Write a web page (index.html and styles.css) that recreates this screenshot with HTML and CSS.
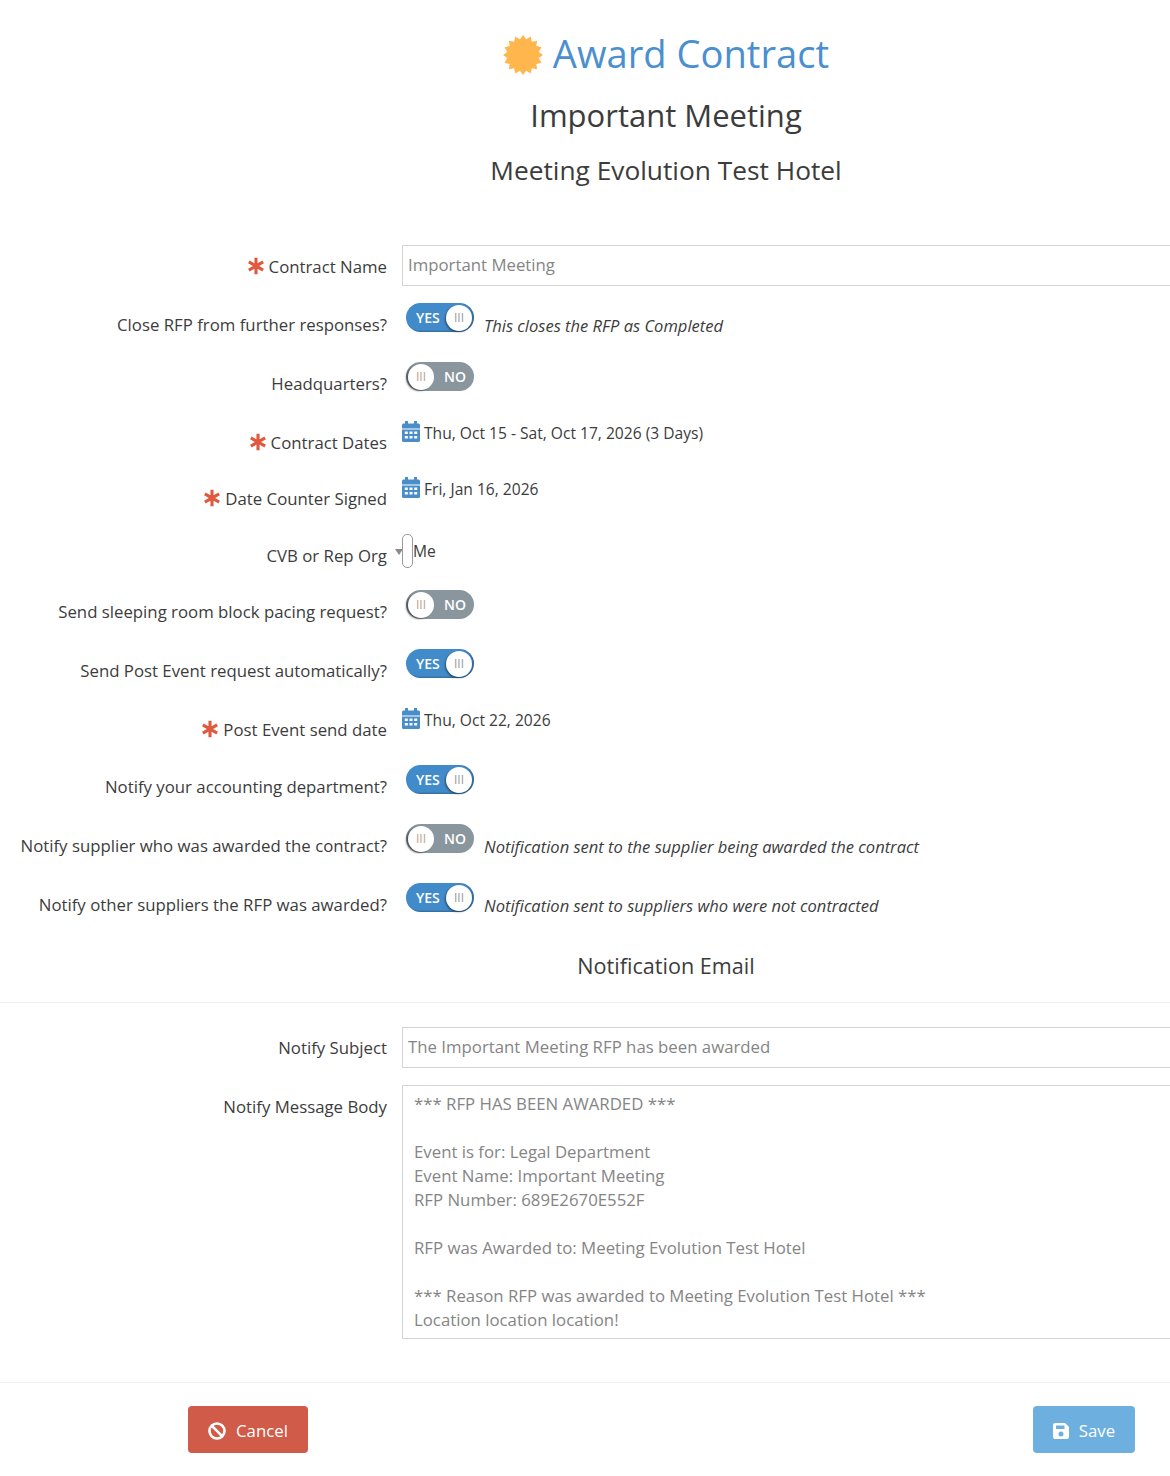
FILE: index.html
```html
<!DOCTYPE html>
<html lang="en">
<head>
    <meta charset="UTF-8">
    <meta name="viewport" content="width=device-width, initial-scale=1.0">
    <title>Award Contract</title>
    <link rel="stylesheet" href="styles.css">
</head>
<body>
    <svg class="defs" width="0" height="0">
        <symbol id="star" viewBox="0 0 24 24"><path d="M12 3v18M4.200 7.500l15.600 9M19.800 7.500l-15.600 9" fill="none" stroke="#e0593f" stroke-width="3.400"/></symbol>
        <symbol id="cal" viewBox="0 0 18 21"><path d="M3 0h3v2.500h6V0h3v2.500h1.500A1.500 1.500 0 0 1 18 4v3.500H0V4a1.500 1.500 0 0 1 1.500-1.500H3zM0 8.500h18v11a1.500 1.500 0 0 1-1.500 1.500h-15A1.500 1.500 0 0 1 0 19.500zM2.800 10.500v2.500h3v-2.500zm4.700 0v2.500h3v-2.500zm4.700 0v2.500h3v-2.500zM2.800 15v2.500h3V15zm4.700 0v2.500h3V15zm4.700 0v2.500h3V15z" fill="#4a8ec9" fill-rule="evenodd"/></symbol>
    </svg>

    <div class="page">
        <header class="titles">
            <h1>
                <svg class="sun" viewBox="-20 -20 40 40">
                    <polygon points="0,-20 3.120,-15.690 7.650,-18.480 8.890,-13.300 14.140,-14.140 13.300,-8.890 18.480,-7.650 15.690,-3.120 20,0 15.690,3.120 18.480,7.650 13.300,8.890 14.140,14.140 8.890,13.300 7.650,18.480 3.120,15.690 0,20 -3.120,15.690 -7.650,18.480 -8.890,13.300 -14.140,14.140 -13.300,8.890 -18.480,7.650 -15.690,3.120 -20,0 -15.690,-3.120 -18.480,-7.650 -13.300,-8.890 -14.140,-14.140 -8.890,-13.300 -7.650,-18.480 -3.120,-15.690"/>
                </svg>
                Award Contract
            </h1>
            <h2>Important Meeting</h2>
            <h3>Meeting Evolution Test Hotel</h3>
        </header>

        <form class="form">
            <div class="row row-input">
                <label><svg class="req"><use href="#star"/></svg>Contract Name</label>
                <div class="field">Important Meeting</div>
            </div>
            <div class="row row-toggle">
                <label>Close RFP from further responses?</label>
                <div class="value"><span class="toggle on"><b>YES</b><i>III</i></span><em>This closes the RFP as Completed</em></div>
            </div>
            <div class="row row-toggle">
                <label>Headquarters?</label>
                <div class="value"><span class="toggle off"><i>III</i><b>NO</b></span></div>
            </div>
            <div class="row row-date">
                <label><svg class="req"><use href="#star"/></svg>Contract Dates</label>
                <div class="date"><svg class="cal"><use href="#cal"/></svg>Thu, Oct 15 - Sat, Oct 17, 2026 (3 Days)</div>
            </div>
            <div class="row row-date">
                <label><svg class="req"><use href="#star"/></svg>Date Counter Signed</label>
                <div class="date"><svg class="cal"><use href="#cal"/></svg>Fri, Jan 16, 2026</div>
            </div>
            <div class="row row-select">
                <label>CVB or Rep Org</label>
                <div class="select"><span class="caret"></span><span class="stub"></span>Me</div>
            </div>
            <div class="row row-toggle">
                <label>Send sleeping room block pacing request?</label>
                <div class="value"><span class="toggle off"><i>III</i><b>NO</b></span></div>
            </div>
            <div class="row row-toggle">
                <label>Send Post Event request automatically?</label>
                <div class="value"><span class="toggle on"><b>YES</b><i>III</i></span></div>
            </div>
            <div class="row row-date row-tall">
                <label><svg class="req"><use href="#star"/></svg>Post Event send date</label>
                <div class="date"><svg class="cal"><use href="#cal"/></svg>Thu, Oct 22, 2026</div>
            </div>
            <div class="row row-toggle">
                <label>Notify your accounting department?</label>
                <div class="value"><span class="toggle on"><b>YES</b><i>III</i></span></div>
            </div>
            <div class="row row-toggle">
                <label>Notify supplier who was awarded the contract?</label>
                <div class="value"><span class="toggle off"><i>III</i><b>NO</b></span><em>Notification sent to the supplier being awarded the contract</em></div>
            </div>
            <div class="row row-toggle">
                <label>Notify other suppliers the RFP was awarded?</label>
                <div class="value"><span class="toggle on"><b>YES</b><i>III</i></span><em>Notification sent to suppliers who were not contracted</em></div>
            </div>

            <h4>Notification Email</h4>
            <hr>

            <div class="row row-input">
                <label>Notify Subject</label>
                <div class="field">The Important Meeting RFP has been awarded</div>
            </div>
            <div class="row row-body">
                <label>Notify Message Body</label>
                <div class="field area">*** RFP HAS BEEN AWARDED ***

Event is for: Legal Department
Event Name: Important Meeting
RFP Number: 689E2670E552F

RFP was Awarded to: Meeting Evolution Test Hotel

*** Reason RFP was awarded to Meeting Evolution Test Hotel ***
Location location location!</div>
            </div>
        </form>

        <hr class="foot-line">
        <footer class="actions">
            <button type="button" class="btn cancel">
                <svg viewBox="0 0 18 18"><circle cx="9" cy="9" r="7.500" fill="none" stroke="#fff" stroke-width="2.600"/><path d="M3.700 3.700l10.600 10.600" stroke="#fff" stroke-width="2.600"/></svg>
                Cancel
            </button>
            <button type="button" class="btn save">
                <svg viewBox="0 0 16 16"><path d="M2 0h10l4 4v10a2 2 0 0 1-2 2H2a2 2 0 0 1-2-2V2a2 2 0 0 1 2-2zm1 2.500V6h8.500V2.500zM8 8.500a2.500 2.500 0 1 0 0 5 2.500 2.500 0 0 0 0-5z" fill="#fff" fill-rule="evenodd"/></svg>
                Save
            </button>
        </footer>
    </div>
</body>
</html>
```

FILE: styles.css
```css
html, body { margin: 0; padding: 0; background: #fff; }
body { font-family: "Open Sans", Arial, sans-serif; font-size: 16px; color: #3c3c3c; }
.defs { position: absolute; }
.page { width: 1170px; height: 1476px; overflow: hidden; }

/* headings are centred on x=666, the form runs wider than the window */
.titles { text-align: center; padding: 27px 0 0 162px; height: 217px; box-sizing: border-box; }
h1 { margin: 0; font-size: 38.150px; line-height: 52px; font-weight: 400; color: #4a8fcf; }
h2 { margin: 13px 0 0; font-size: 31px; line-height: 46px; font-weight: 400; }
h3 { margin: 9px 0 0; font-size: 26.300px; line-height: 46px; font-weight: 400; }
.sun { width: 40px; height: 40px; vertical-align: -7px; fill: #ffb64d; }

.form { margin-top: 28px; }
.row { display: grid; grid-template-columns: 387px 1fr; column-gap: 15px; }
.row label { text-align: right; white-space: nowrap; font-size: 16.800px; line-height: 24px; }
.req { width: 22px; height: 22px; vertical-align: -4px; margin-right: 2px; }

.field { border: 1px solid #d4d4d4; border-right: 0; color: #858585; font-size: 16.800px; line-height: 24px; padding: 7px 5px 8px; height: 41px; box-sizing: border-box; }
.row-input { height: 60px; }
.row-input label { padding-top: 10px; }

.row-toggle { height: 59px; }
.row-toggle label { padding-top: 8px; }
.value { display: flex; align-items: flex-start; padding-left: 4px; margin-top: -2px; }
.value em { font-size: 16.550px; line-height: 24px; margin: 11px 0 0 10px; color: #3c3c3c; }
.toggle { width: 68px; height: 29px; border-radius: 15px; display: flex; align-items: center; justify-content: space-between; color: #fff; box-sizing: border-box; font-size: 14px; }
.toggle b { font-weight: 600; }
.toggle i { width: 26px; height: 26px; border-radius: 50%; background: #fff; color: #999; font-style: normal; font-size: 12px; text-align: center; line-height: 25px; font-weight: 400; }
.toggle.on { background: #428bca; padding: 0 2px 0 10px; box-shadow: inset -2px -1px 2px rgba(0, 0, 0, .25); }
.toggle.on i { box-shadow: -1px 1px 2px rgba(0, 0, 0, .45); }
.toggle.off { background: #8a969e; padding: 0 8px 0 2px; }
.toggle.off i { color: #b9a08c; box-shadow: -2px 1px 2px rgba(0, 0, 0, .45); }

.row-date { height: 56px; }
.row-tall { height: 57px; }
.row-date label { padding-top: 8px; }
.date { font-size: 15.600px; line-height: 24px; display: flex; align-items: flex-start; margin-top: -2px; }
.cal { width: 18px; height: 21px; margin-right: 4px; flex: none; }

.row-select { height: 57px; }
.row-select label { padding-top: 9px; }
.select { display: flex; align-items: flex-start; font-size: 15.600px; line-height: 24px; margin-left: -8px; padding-top: 4px; }
.caret { width: 0; height: 0; border: 4px solid transparent; border-top: 6px solid #8a8a8a; margin-top: 10px; margin-left: 1px; margin-right: -1px; }
.stub { width: 9px; height: 32px; border: 1px solid #999; border-radius: 5px; background: #fff; margin-top: -5px; }

h4 { margin: 0; font-size: 21.600px; line-height: 30px; font-weight: 400; text-align: center; padding: 7px 0 21px 162px; }
hr { border: 0; border-top: 1px solid #eee; margin: 0; }
.form > hr { margin-bottom: 24px; }
.form > hr + .row-input { height: 58px; }
.form > hr + .row-input label { padding-top: 9px; }

.area { height: 254px; padding: 6px 11px; white-space: pre-line; }
.row-body { height: 254px; }
.row-body label { padding-top: 10px; }

.foot-line { margin-top: 43px; }
.actions { display: flex; justify-content: space-between; padding: 23px 35px 0 188px; }
.btn { height: 47px; border: 0; border-radius: 4px; color: #fff; font-family: inherit; font-size: 16.800px; display: flex; align-items: center; justify-content: center; gap: 10px; padding: 2px 0 0; }
.btn svg { width: 18px; height: 18px; }
.cancel { width: 120px; background: #d05b48; }
.save { width: 102px; background: #6db0e0; }
.save svg { width: 16px; height: 16px; }
```
